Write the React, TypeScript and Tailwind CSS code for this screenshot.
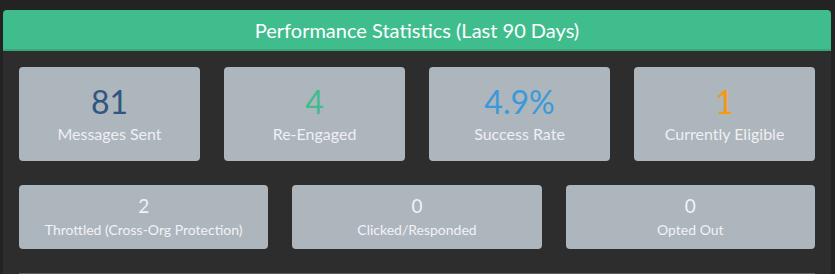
const topStats = [
  { value: "81", label: "Messages Sent", color: "text-[#31567f]" },
  { value: "4", label: "Re-Engaged", color: "text-[#3fbd8d]" },
  { value: "4.9%", label: "Success Rate", color: "text-[#3a9ad9]" },
  { value: "1", label: "Currently Eligible", color: "text-[#f39c12]" },
];

const lowerStats = [
  { value: "2", label: "Throttled (Cross-Org Protection)" },
  { value: "0", label: "Clicked/Responded" },
  { value: "0", label: "Opted Out" },
];

export default function App() {
  return (
    <div
      className="min-h-[274px] w-[835px] overflow-hidden bg-[#232323] pl-[3px] pr-[4px] pt-[10px]"
      style={{ fontFamily: "Lato, 'Open Sans', sans-serif" }}
    >
      <div className="rounded-t-[4px] bg-[#2d2d2d]">
        <div className="flex h-[41px] items-center justify-center rounded-t-[4px] border-b-2 border-[#37a87c] bg-[#3fbd8d]">
          <h2 className="text-[20px] leading-none text-white">
            Performance Statistics (Last 90 Days)
          </h2>
        </div>
        <div className="px-4 pt-4">
          <div className="grid grid-cols-4 gap-6">
            {topStats.map((s) => (
              <div
                key={s.label}
                className="flex h-[94px] flex-col items-center rounded-[4px] bg-[#adb5bd] pt-[17px]"
              >
                <div className={`text-[32px] leading-[36px] ${s.color}`}>
                  {s.value}
                </div>
                <div className="mt-[4px] text-[16px] leading-[20px] text-[#eef0f2]">
                  {s.label}
                </div>
              </div>
            ))}
          </div>
          <div className="mt-6 grid grid-cols-3 gap-6">
            {lowerStats.map((s) => (
              <div
                key={s.label}
                className="flex h-[64px] flex-col items-center rounded-[4px] bg-[#adb5bd] pt-[9px]"
              >
                <div className="text-[19px] leading-[24px] text-[#f1f3f5]">
                  {s.value}
                </div>
                <div className="mt-[3px] text-[14px] leading-[18px] text-[#f1f3f5]">
                  {s.label}
                </div>
              </div>
            ))}
          </div>
          <div className="mt-6 h-[2px] bg-[#5a5f64]" />
        </div>
      </div>
    </div>
  );
}
